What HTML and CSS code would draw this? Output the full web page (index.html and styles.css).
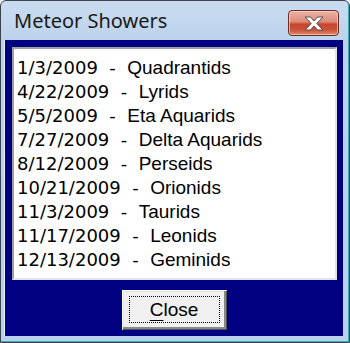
FILE: index.html
```html
<!DOCTYPE html>
<html>
<head>
<meta charset="utf-8">
<title>Meteor Showers</title>
<link rel="stylesheet" href="styles.css">
</head>
<body>
<div class="window">
  <div class="titlebar">
    <span class="title">Meteor Showers</span>
    <div class="close-x">
      <svg width="24" height="15" viewBox="0 0 24 15">
        <path d="M3 1 L8.5 1 L12 5 L15.5 1 L21 1 L14.8 7.5 L21 14 L15.5 14 L12 10 L8.5 14 L3 14 L9.2 7.5 Z" fill="#ffffff" stroke="#5a4a48" stroke-width="1" stroke-linejoin="round"/>
      </svg>
    </div>
  </div>
  <div class="client">
    <div class="listbox">
      <div class="item"><span class="date">1/3/2009&nbsp;&nbsp;-&nbsp;&nbsp;</span><span class="name">Quadrantids</span></div>
      <div class="item"><span class="date">4/22/2009&nbsp;&nbsp;-&nbsp;&nbsp;</span><span class="name">Lyrids</span></div>
      <div class="item"><span class="date">5/5/2009&nbsp;&nbsp;-&nbsp;&nbsp;</span><span class="name">Eta Aquarids</span></div>
      <div class="item"><span class="date">7/27/2009&nbsp;&nbsp;-&nbsp;&nbsp;</span><span class="name">Delta Aquarids</span></div>
      <div class="item"><span class="date">8/12/2009&nbsp;&nbsp;-&nbsp;&nbsp;</span><span class="name">Perseids</span></div>
      <div class="item"><span class="date">10/21/2009&nbsp;&nbsp;-&nbsp;&nbsp;</span><span class="name">Orionids</span></div>
      <div class="item"><span class="date">11/3/2009&nbsp;&nbsp;-&nbsp;&nbsp;</span><span class="name">Taurids</span></div>
      <div class="item"><span class="date">11/17/2009&nbsp;&nbsp;-&nbsp;&nbsp;</span><span class="name">Leonids</span></div>
      <div class="item"><span class="date">12/13/2009&nbsp;&nbsp;-&nbsp;&nbsp;</span><span class="name">Geminids</span></div>
    </div>
    <div class="btn-row">
      <button class="btn"><span class="focus"><u>C</u>lose</span></button>
    </div>
  </div>
</div>
</body>
</html>
```
FILE: styles.css
```css
html, body {
  margin: 0;
  padding: 0;
  width: 350px;
  height: 343px;
  overflow: hidden;
  background: #ffffff;
}

.window {
  width: 350px;
  height: 343px;
  box-sizing: border-box;
  border: 1px solid #3c4350;
  border-radius: 6px 6px 0 0;
  background: linear-gradient(#cadcf0 0px, #bcd3ec 40px, #b9d1ea 100%);
  padding: 0 6px 6px 4px;
  display: flex;
  flex-direction: column;
  box-shadow: inset -1px -1px 0 #3aa9b8;
}

.titlebar {
  height: 39px;
  flex: none;
  display: flex;
  justify-content: space-between;
  align-items: flex-start;
  padding: 0 4px 0 9px;
}

.title {
  font-family: "Noto Sans", sans-serif;
  font-size: 20px;
  color: #1a1a1a;
  line-height: 27px;
  margin-top: 6px;
}

.close-x {
  margin-top: 9px;
  width: 49px;
  height: 24px;
  border: 1px solid #6b2f25;
  border-radius: 4px;
  background: linear-gradient(#eab3a6 0%, #dc8b78 45%, #c6442b 55%, #c9563c 80%, #e08a6e 100%);
  box-shadow: inset 0 0 0 1px rgba(255, 220, 210, 0.6);
  display: flex;
  align-items: center;
  justify-content: center;
}

.close-x svg {
  display: block;
}

.client {
  flex: 1;
  background: #000080;
  padding: 7px 6px 6px 7px;
  display: flex;
  flex-direction: column;
  box-shadow: -1px 0 0 #e8f0f8;
}

.listbox {
  height: 233px;
  box-sizing: border-box;
  background: #ffffff;
  border-style: solid;
  border-width: 2px;
  border-color: #a0a0a0 #e3e3e3 #e3e3e3 #a0a0a0;
  padding: 7px 3px 0 3px;
  font-family: "DejaVu Sans", sans-serif;
  font-size: 18px;
  line-height: 24px;
  color: #000000;
}

.item {
  white-space: nowrap;
}

.name {
  font-family: "Liberation Sans", sans-serif;
  font-size: 19px;
}

.btn-row {
  display: flex;
  justify-content: center;
  margin-top: 10px;
  padding-right: 1px;
}

.btn {
  width: 105px;
  height: 40px;
  box-sizing: border-box;
  background: #f0f0f0;
  border: none;
  padding: 0;
  box-shadow: inset 1px 1px 0 #ffffff, inset -1px -1px 0 #505050, inset -3px -3px 0 #8a8a8a, inset 2px 2px 0 #e3e3e3;
  display: flex;
  align-items: stretch;
  justify-content: stretch;
  font-family: "Liberation Sans", sans-serif;
  font-size: 19px;
  color: #000000;
}

.focus {
  flex: 1;
  margin: 6px 7px 7px 7px;
  border: 1px dotted #000000;
  display: flex;
  align-items: center;
  justify-content: center;
  line-height: 20px;
  padding-top: 1px;
}

.focus u {
  text-decoration-thickness: 1px;
  text-underline-offset: 4px;
}
```
